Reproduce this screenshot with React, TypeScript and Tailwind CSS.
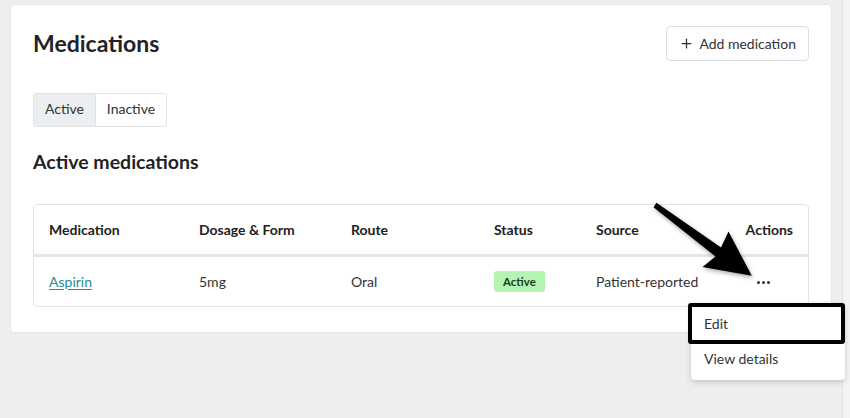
import React from "react";
import { Plus } from "lucide-react";

const FONT = { fontFamily: "Lato, 'Open Sans', sans-serif" };

type Med = {
  name: string;
  dosage: string;
  route: string;
  status: string;
  source: string;
};

const MEDS: Med[] = [
  { name: "Aspirin", dosage: "5mg", route: "Oral", status: "Active", source: "Patient-reported" },
];

/** Annotation arrow pointing at the actions menu */
function PointerArrow() {
  return (
    <svg
      className="absolute left-0 top-0 pointer-events-none"
      width="850"
      height="418"
      viewBox="0 0 850 418"
      style={{ filter: "drop-shadow(1px 2px 2px rgba(0,0,0,0.35))" }}
    >
      <polygon
        points="656.5,202.8 721,247.5 728.5,231.5 751.8,275.8 702.5,267.1 715.5,256.5 653.5,207.2"
        fill="#000"
      />
    </svg>
  );
}

function ActionsMenu() {
  return (
    <div className="absolute left-[691px] top-[303px] w-[154px] bg-white rounded shadow-[0_2px_6px_rgba(0,0,0,0.18)] pb-2">
      <div className="-ml-[3px] h-[41px] border-[4px] border-black rounded-[3px] flex items-center pl-[12px] text-[14px] text-[#333]">
        Edit
      </div>
      <div className="h-[28px] flex items-center pl-[13px] text-[14px] text-[#333]">View details</div>
    </div>
  );
}

export default function App() {
  return (
    <div className="relative w-[850px] h-[418px] bg-[#eeeeee] flex overflow-hidden" style={FONT}>
      <div className="flex-1 pl-[10px] pt-[4px]">
        <div className="w-[822px] bg-white rounded-[4px] border border-[#e6e6e6] px-[22px] pt-[21px] pb-[25px]">
          {/* Header */}
          <div className="flex items-center justify-between">
            <h1 className="text-[23px] font-bold text-[#1f2326] leading-none -mt-[1px]">Medications</h1>
            <button className="h-[35px] px-[12px] flex items-center gap-[5px] border border-[#dcdfe1] rounded-[4px] text-[14px] text-[#333] bg-white">
              <Plus className="w-[15px] h-[15px] text-[#333]" strokeWidth={2} />
              Add medication
            </button>
          </div>

          {/* Tabs */}
          <div className="mt-[32px] flex">
            <button className="h-[34px] w-[63px] text-[14px] leading-none pb-[2px] text-[#333] bg-[#eceff1] border border-[#dfe3e6] rounded-l-[3px]">
              Active
            </button>
            <button className="h-[34px] w-[71px] text-[14px] leading-none pb-[2px] text-[#333] bg-white border border-l-0 border-[#dfe3e6] rounded-r-[3px]">
              Inactive
            </button>
          </div>

          <h2 className="mt-[25px] text-[19.5px] font-bold text-[#1f2326] leading-none">Active medications</h2>

          {/* Table */}
          <div className="mt-[32px] border border-[#e0e4e6] rounded-[4px] overflow-hidden">
            <table className="w-full text-[14px] border-collapse">
              <thead>
                <tr className="h-[51px] border-b-[3px] border-[#e3e7e9] text-[#222] font-bold">
                  <th className="w-[149px] pl-[15px] text-left font-bold">Medication</th>
                  <th className="w-[152px] pl-[16px] text-left font-bold">Dosage &amp; Form</th>
                  <th className="w-[143px] pl-[16px] text-left font-bold">Route</th>
                  <th className="w-[102px] pl-[16px] text-left font-bold">Status</th>
                  <th className="pl-[16px] text-left font-bold">Source</th>
                  <th className="pr-[15px] text-right font-bold">Actions</th>
                </tr>
              </thead>
              <tbody>
                {MEDS.map((m) => (
                  <tr key={m.name} className="h-[50px] text-[#333]">
                    <td className="pl-[15px]">
                      <a className="text-[#2b8a92] underline underline-offset-2">{m.name}</a>
                    </td>
                    <td className="pl-[16px]">{m.dosage}</td>
                    <td className="pl-[16px]">{m.route}</td>
                    <td className="pl-[16px]">
                      <span className="inline-block px-[9px] py-[2px] rounded-[3px] bg-[#b3f5b1] text-[11.5px] font-bold text-[#1f3a22] -mt-[6px]">
                        {m.status}
                      </span>
                    </td>
                    <td className="pl-[16px]">{m.source}</td>
                    <td className="pr-[38px]">
                      <div className="flex justify-end gap-[2px] pt-[3px]">
                        <span className="w-[3px] h-[3px] rounded-full bg-[#333]" />
                        <span className="w-[3px] h-[3px] rounded-full bg-[#333]" />
                        <span className="w-[3px] h-[3px] rounded-full bg-[#333]" />
                      </div>
                    </td>
                  </tr>
                ))}
              </tbody>
            </table>
          </div>
        </div>
      </div>
      <div className="w-[8px] bg-[#f4f4f4] border-l border-[#e4e4e4]" />

      <PointerArrow />
      <ActionsMenu />
    </div>
  );
}
